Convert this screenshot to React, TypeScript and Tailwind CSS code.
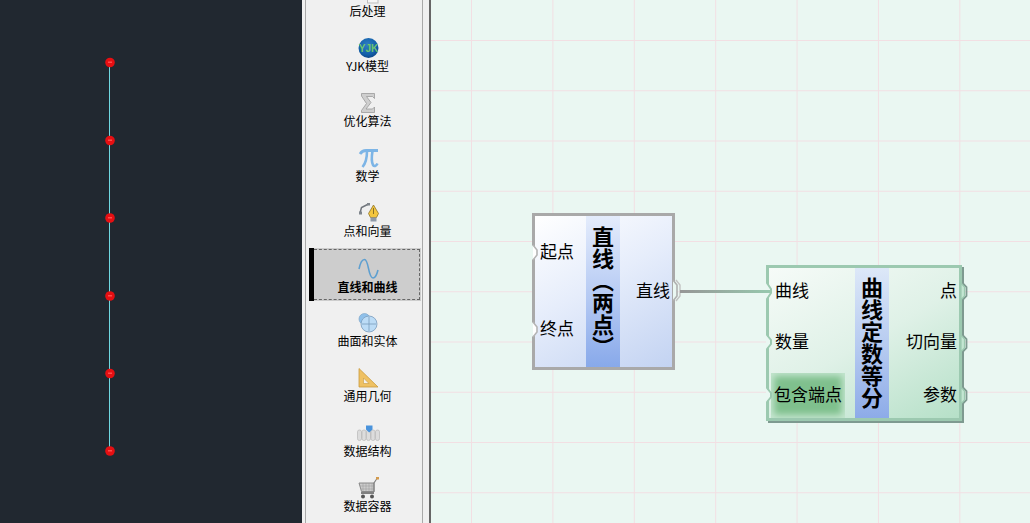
import type { ReactNode } from "react"

const cjk = "font-['Noto_Sans_CJK_SC','Noto_Sans',sans-serif]"

const dots = [62.5, 140.5, 218, 296, 373.5, 451]

function Viewport() {
  return (
    <div className="relative h-full w-[302px] shrink-0 bg-[#212830]">
      <svg width="302" height="523" className="absolute inset-0">
        <line x1="109.5" y1="62" x2="109.5" y2="451" stroke="#6fd8e0" strokeWidth="1" />
        {dots.map((y) => (
          <g key={y}>
            <circle cx="110" cy={y} r="4.8" fill="#e60f12" />
            <rect x="108" y={y - 1} width="4" height="1.5" fill="#ff4a4a" />
          </g>
        ))}
      </svg>
    </div>
  )
}

function TopIcon() {
  return (
    <svg width="24" height="22" viewBox="0 0 24 22">
      <rect x="11.5" y="4" width="10.5" height="17" fill="#f6f6f6" stroke="#bdbdbd" />
    </svg>
  )
}

function YjkIcon() {
  return (
    <svg width="24" height="22" viewBox="0 0 24 22">
      <defs>
        <radialGradient id="yjkBall" cx="0.45" cy="0.35" r="0.75">
          <stop offset="0" stopColor="#2f7fc4" />
          <stop offset="0.65" stopColor="#125ea8" />
          <stop offset="1" stopColor="#0a3a76" />
        </radialGradient>
      </defs>
      <circle cx="12.5" cy="11" r="10" fill="url(#yjkBall)" />
      <text x="12.5" y="14.5" textAnchor="middle" fontSize="10" fontWeight="700" fill="#6fc56f" fontFamily="Liberation Sans, sans-serif">
        YJK
      </text>
    </svg>
  )
}

function SigmaIcon() {
  return (
    <svg width="24" height="22" viewBox="0 0 24 22">
      <path d="M5.5 1.5H18.5V6.5L16.5 4.5H10.5L15 10.5L10 17H16.5L18.5 15V20.5H5.5V18.5L10.5 11.5L5.5 4Z" fill="#cfcfcf" stroke="#9b9b9b" strokeWidth="0.8" />
    </svg>
  )
}

function PiIcon() {
  return (
    <svg width="24" height="22" viewBox="0 0 24 22">
      <path d="M4 7C6 3.8 8 3.5 10 3.5H22" fill="none" stroke="#7db5e6" strokeWidth="2.8" />
      <path d="M11 4C11 10 10 16 6.5 20" fill="none" stroke="#7db5e6" strokeWidth="2.6" />
      <path d="M16.5 4C15.5 10 15.5 15 17 18C18 19.7 20.2 19.2 21.5 16.5" fill="none" stroke="#7db5e6" strokeWidth="2.6" />
    </svg>
  )
}

function PenIcon() {
  return (
    <svg width="24" height="22" viewBox="0 0 24 22">
      <path d="M4 11L5.5 5.5L12.5 2" fill="none" stroke="#70757c" strokeWidth="1.5" />
      <rect x="3" y="9.5" width="3" height="3" fill="#7f858c" />
      <rect x="11" y="1" width="3" height="2.5" fill="#7f858c" />
      <path d="M17.5 3L22.5 11.5L20.5 15.5H14.5L12.5 11.5Z" fill="#f3c63f" stroke="#8f7428" strokeWidth="0.8" />
      <rect x="14.5" y="15.5" width="6" height="4" fill="#8f9aa8" />
      <line x1="17.5" y1="6" x2="17.5" y2="12" stroke="#6f5a1f" strokeWidth="0.8" />
    </svg>
  )
}

function WaveIcon() {
  return (
    <svg width="24" height="22" viewBox="0 0 24 22">
      <path d="M3 11C4 6 6 1.5 8.5 1.5C13 1.5 12 20 17 20C19.5 20 21 16 22 12" fill="none" stroke="#5d9fd0" strokeWidth="1.6" />
    </svg>
  )
}

function SurfaceIcon() {
  return (
    <svg width="24" height="22" viewBox="0 0 24 22">
      <circle cx="8.5" cy="7" r="5.5" fill="#8fc0ea" stroke="#7ea6c9" strokeWidth="0.7" />
      <circle cx="13" cy="12" r="8" fill="#bcdcf6" stroke="#7a9cbd" strokeWidth="0.8" />
      <line x1="13" y1="5" x2="13" y2="19" stroke="#7a9cbd" strokeWidth="0.8" />
      <line x1="6" y1="12" x2="20" y2="12" stroke="#7a9cbd" strokeWidth="0.8" />
    </svg>
  )
}

function TriangleIcon() {
  return (
    <svg width="24" height="22" viewBox="0 0 24 22">
      <path d="M3 1.5L22 20H3Z" fill="#efc163" stroke="#c99a3c" strokeWidth="0.8" />
      <path d="M7.5 11V16.5H13Z" fill="#f2f2f2" stroke="#c99a3c" strokeWidth="0.6" />
    </svg>
  )
}

function DataIcon() {
  return (
    <svg width="24" height="22" viewBox="0 0 24 22">
      {[3, 7.5, 12, 16.5, 21].map((x) => (
        <rect key={x} x={x - 1.5} y="8" width="4" height="10.5" rx="1.8" fill="#dcdcdc" stroke="#b0b0b0" strokeWidth="0.6" />
      ))}
      <path d="M10 3.5H16.5V7.5L13.2 10.5L10 7.5Z" fill="#4a93dc" />
    </svg>
  )
}

function CartIcon() {
  return (
    <svg width="24" height="22" viewBox="0 0 24 22">
      <path d="M3 6H18V14.5H5.5Z" fill="#cccccc" stroke="#808080" strokeWidth="0.9" />
      <path d="M4 9H18M5 12H18M7 6V14M10 6V14M13 6V14M16 6V14" stroke="#9a9a9a" strokeWidth="0.5" />
      <path d="M18 15V6L21 1.5" fill="none" stroke="#808080" strokeWidth="1.1" />
      <rect x="20" y="0" width="3" height="2.5" fill="#d39a4c" />
      <rect x="5" y="15" width="13" height="2" fill="#808080" />
      <circle cx="7" cy="19.5" r="2" fill="#555" />
      <circle cx="16" cy="19.5" r="2" fill="#555" />
    </svg>
  )
}

const tabs: { label: string; icon: ReactNode; active?: boolean }[] = [
  { label: "后处理", icon: <TopIcon /> },
  { label: "YJK模型", icon: <YjkIcon /> },
  { label: "优化算法", icon: <SigmaIcon /> },
  { label: "数学", icon: <PiIcon /> },
  { label: "点和向量", icon: <PenIcon /> },
  { label: "直线和曲线", icon: <WaveIcon />, active: true },
  { label: "曲面和实体", icon: <SurfaceIcon /> },
  { label: "通用几何", icon: <TriangleIcon /> },
  { label: "数据结构", icon: <DataIcon /> },
  { label: "数据容器", icon: <CartIcon /> },
]

function Sidebar() {
  return (
    <div className="h-full w-[129px] shrink-0 border-r-2 border-[#666666] bg-[#f0f0f0] pl-[3px] pr-[6px]">
      <div className="h-full overflow-hidden border-x border-[#a9a9a9]">
        <div className="ml-[3px] mr-px mt-[-27px] flex flex-col gap-[2px]">
          {tabs.map((t) => (
            <div key={t.label} className={`flex h-[53px] ${t.active ? "bg-[#cdcdcd]" : ""}`}>
              <div className={`w-[5px] shrink-0 ${t.active ? "bg-black" : ""}`} />
              <div
                className={`my-px flex flex-1 flex-col items-center pt-[8px] ${
                  t.active ? "mr-px border border-l-0 border-dashed border-[#666666] pl-[2px]" : ""
                }`}
              >
                <div className="h-[22px] w-[24px]">{t.icon}</div>
                <div className={`mt-[-1px] text-[12px] leading-[16px] text-black ${t.active ? "font-bold" : ""}`}>{t.label}</div>
              </div>
            </div>
          ))}
        </div>
      </div>
    </div>
  )
}

function LineNode() {
  return (
    <div className={`absolute left-[101px] top-[213px] flex h-[157px] w-[143px] border-[3px] border-[#a9a9a9] bg-[linear-gradient(150deg,#ffffff_0%,#e6edfb_45%,#c3d3f2_100%)] text-[17px] leading-[20px] text-black ${cjk}`}>
      <div className="flex w-[51px] flex-col justify-between pb-[29px] pl-[5px] pt-[25px]">
        <span>起点</span>
        <span>终点</span>
      </div>
      <div className="flex w-[34px] items-center justify-center bg-[linear-gradient(to_bottom,#e4ecfc,#b4c9f3_55%,#88a9ea)]">
        <span className="text-[22px] font-bold leading-[34px] [writing-mode:vertical-rl]">直线（两点）</span>
      </div>
      <div className="flex flex-1 items-center justify-end pb-[4px] pr-[2px]">
        <span>直线</span>
      </div>
      <svg width="143" height="157" className="absolute left-[-3px] top-[-3px] overflow-visible">
        <path d="M0 32L5 37V42L0 47Z" fill="#eaf7f2" />
        <path d="M1 32L5 37V42L1 47" fill="#fff" stroke="#b5b5b5" strokeWidth="1.6" />
        <path d="M0 109L5 114V119L0 124Z" fill="#eaf7f2" />
        <path d="M1 109L5 114V119L1 124" fill="#fff" stroke="#b5b5b5" strokeWidth="1.6" />
        <path d="M141 67L145 72V83L141 88" fill="#eaf7f2" stroke="#b0b0b0" strokeWidth="1.6" />
        <path d="M144 67L148 72V83L144 88" fill="none" stroke="#c2c2c2" strokeWidth="1.4" />
      </svg>
    </div>
  )
}

function DivideNode() {
  return (
    <div className={`absolute left-[335px] top-[265px] flex h-[156px] w-[196px] border-[3px] border-[#9cc9b0] bg-[linear-gradient(150deg,#f6fbf8_0%,#dff1e7_50%,#b6e0c8_100%)] text-[17px] leading-[20px] text-black shadow-[2px_2px_0_#7e9a90] ${cjk}`}>
      <div className="flex w-[86px] flex-col">
        <span className="pl-[6px] pt-[12px]">曲线</span>
        <span className="pl-[6px] pt-[31px]">数量</span>
        <div className="ml-[2px] mt-[22px] flex h-[45px] w-[74px] items-center justify-center whitespace-nowrap bg-[#7fc08d] pb-[3px] shadow-[inset_0_0_7px_3px_#c6e6d1]">
          包含端点
        </div>
      </div>
      <div className="flex w-[34px] items-center justify-center bg-[linear-gradient(to_bottom,#dde8f8,#b4c9f0_55%,#8dabe8)]">
        <span className="text-[22px] font-bold leading-[34px] [writing-mode:vertical-rl]">曲线定数等分</span>
      </div>
      <div className="flex flex-1 flex-col items-end pr-[2px]">
        <span className="pt-[12px]">点</span>
        <span className="pt-[31px]">切向量</span>
        <span className="pt-[33px]">参数</span>
      </div>
      <svg width="196" height="156" className="absolute left-[-3px] top-[-3px] overflow-visible">
        <path d="M0 18L5 24V28L0 34Z" fill="#eaf7f2" />
        <path d="M1 18L5 24V28L1 34" fill="none" stroke="#9cc9b0" strokeWidth="2" />
        <path d="M0 70L5 75V79L0 84Z" fill="#eaf7f2" />
        <path d="M1 70L5 75V79L1 84" fill="none" stroke="#9cc9b0" strokeWidth="2" />
        <path d="M0 123L5 128V132L0 137Z" fill="#eaf7f2" />
        <path d="M1 123L5 128V132L1 137" fill="none" stroke="#9cc9b0" strokeWidth="2" />
        {[18, 70, 122].map((y) => (
          <g key={y}>
            <path d={`M196.5 ${y}L200.5 ${y + 4}V${y + 13}L196.5 ${y + 17}`} fill="none" stroke="#7e9a90" strokeWidth="1.8" />
            <path d={`M195 ${y}L198.5 ${y + 4}V${y + 13}L195 ${y + 17}Z`} fill="#c3e6d2" stroke="#9cc9b0" strokeWidth="1.2" />
          </g>
        ))}
      </svg>
    </div>
  )
}

function Canvas() {
  return (
    <div className="relative h-full flex-1 overflow-hidden bg-[#eaf7f2] bg-[linear-gradient(to_right,#f2dfe3_1px,transparent_1px),linear-gradient(to_bottom,#f2dfe3_1px,transparent_1px)] bg-[size:81.4px_50.25px] bg-[position:40px_40px]">
      <LineNode />
      <DivideNode />
      <svg width="599" height="523" className="absolute inset-0">
        <defs>
          <linearGradient id="wire" x1="0" x2="1" y1="0" y2="0">
            <stop offset="0" stopColor="#969696" />
            <stop offset="1" stopColor="#97c8ae" />
          </linearGradient>
        </defs>
        <rect x="249" y="290" width="90" height="3" fill="url(#wire)" />
      </svg>
    </div>
  )
}

export default function App() {
  return (
    <div className="flex h-[523px] w-[1030px] overflow-hidden">
      <Viewport />
      <div className={cjk + " h-full shrink-0"}>
        <Sidebar />
      </div>
      <Canvas />
    </div>
  )
}
